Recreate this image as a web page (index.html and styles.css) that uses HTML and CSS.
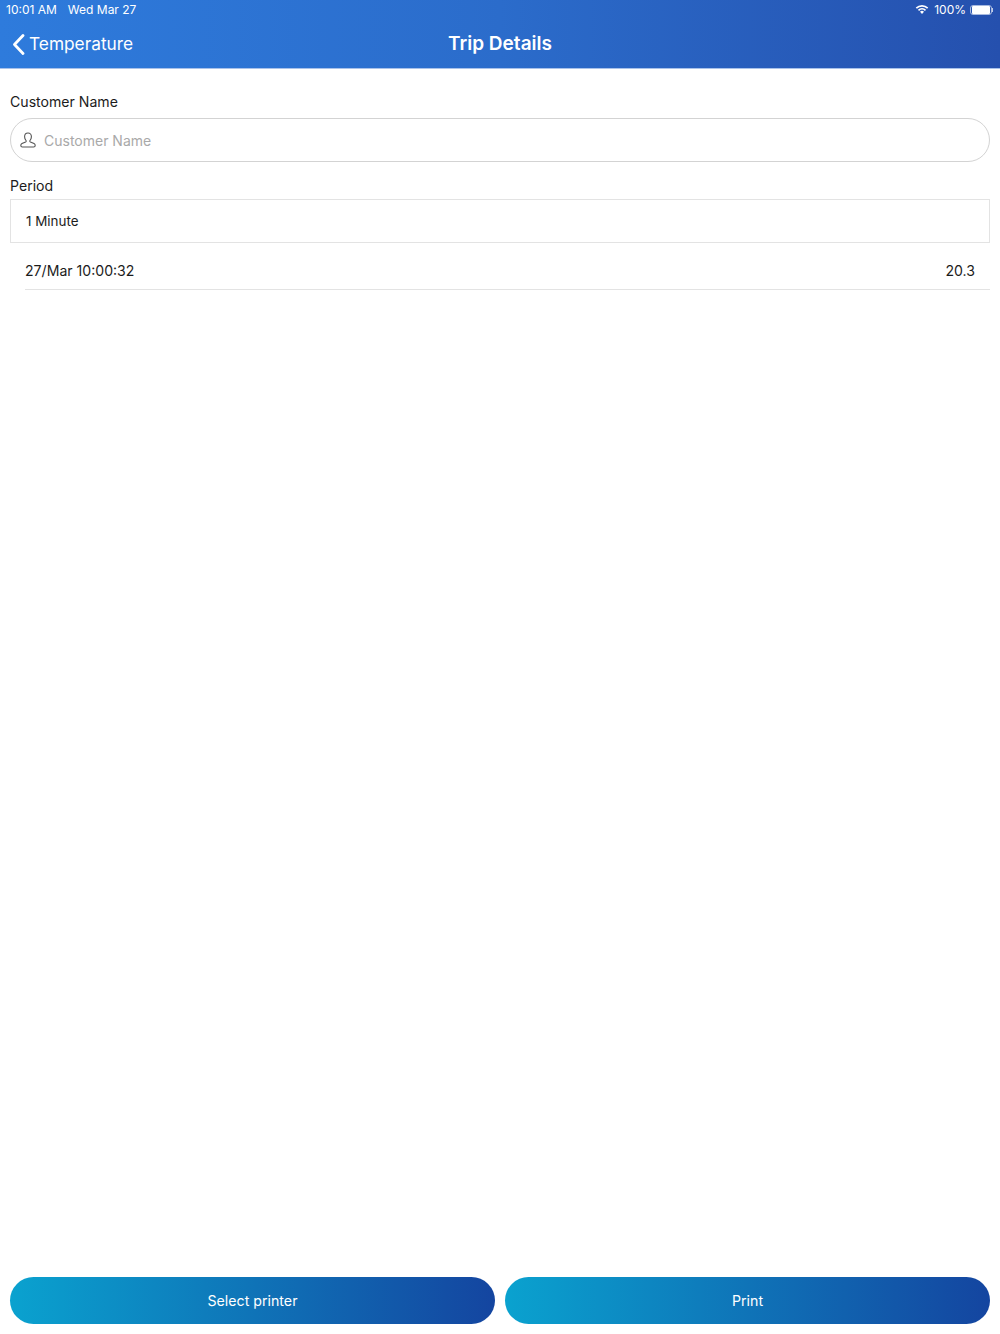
FILE: index.html
```html
<!DOCTYPE html>
<html lang="en">
<head>
  <meta charset="UTF-8">
  <meta name="viewport" content="width=device-width, initial-scale=1.0">
  <title>Trip Details</title>
  <link rel="stylesheet" href="styles.css">
</head>
<body>
  <div class="page">
    <header class="header">
      <div class="status-bar">
        <div class="status-left">
          <span>10:01 AM</span>
          <span>Wed Mar 27</span>
        </div>
        <div class="status-right">
          <svg class="wifi" width="14" height="10" viewBox="0 0 15 11">
            <path d="M0.6 3.8 A10 10 0 0 1 14.4 3.8 L13.1 5.2 A8 8 0 0 0 1.9 5.2 Z" fill="#fff"/>
            <path d="M3 6.2 A6.6 6.6 0 0 1 12 6.2 L10.7 7.6 A4.6 4.6 0 0 0 4.3 7.6 Z" fill="#fff"/>
            <path d="M5.3 8.6 A3.2 3.2 0 0 1 9.7 8.6 L7.5 10.9 Z" fill="#fff"/>
          </svg>
          <span>100%</span>
          <div class="battery"><div class="battery-fill"></div></div>
          <div class="battery-tip"></div>
        </div>
      </div>
      <div class="nav-bar">
        <div class="back">
          <svg class="back-icon" width="13" height="21" viewBox="0 0 13 21">
            <path d="M11 1.5 L2.5 10.5 L11 19.5" fill="none" stroke="#fff" stroke-width="2.8" stroke-linecap="round" stroke-linejoin="round"/>
          </svg>
          <span>Temperature</span>
        </div>
        <h1>Trip Details</h1>
      </div>
    </header>

    <main class="content">
      <label class="field-label">Customer Name</label>
      <div class="name-input">
        <svg class="user-icon" width="16" height="16" viewBox="0 0 16 16">
          <path d="M8 1 C5.9 1 4.6 2.6 4.6 4.7 C4.6 6.4 5.3 7.7 6 8.5 C6.4 9 6.2 9.7 5.6 10 L2 11.6 C1.2 12 0.8 12.6 0.8 13.4 C0.8 14.4 1.5 15 2.4 15 L13.6 15 C14.5 15 15.2 14.4 15.2 13.4 C15.2 12.6 14.8 12 14 11.6 L10.4 10 C9.8 9.7 9.6 9 10 8.5 C10.7 7.7 11.4 6.4 11.4 4.7 C11.4 2.6 10.1 1 8 1 Z" fill="none" stroke="#555" stroke-width="1.1"/>
        </svg>
        <span class="placeholder">Customer Name</span>
      </div>

      <label class="field-label period-label">Period</label>
      <div class="period-box">1 Minute</div>

      <div class="reading">
        <span>27/Mar 10:00:32</span>
        <span>20.3</span>
      </div>
    </main>

    <footer class="actions">
      <button class="action-btn">Select printer</button>
      <button class="action-btn">Print</button>
    </footer>
  </div>
</body>
</html>
```

FILE: styles.css
```css
* {
  box-sizing: border-box;
}
body {
  margin: 0;
  font-family: 'Inter', 'Liberation Sans', sans-serif;
  background: #fff;
  color: #1c1c1c;
}
.page {
  height: 1334px;
  display: flex;
  flex-direction: column;
}
.header {
  height: 69px;
  color: #fff;
  border-bottom: 1px solid #a9c2ea;
  background: linear-gradient(90deg, #2e7bdc 0%, #2b6ccb 50%, #2550ae 100%);
}
.status-bar {
  height: 18px;
  padding: 0 7px 0 6px;
  display: flex;
  justify-content: space-between;
  align-items: center;
  font-size: 12px;
}
.status-left {
  display: flex;
  gap: 11px;
}
.status-right {
  display: flex;
  align-items: center;
  gap: 5px;
}
.battery {
  width: 22px;
  height: 10px;
  margin-left: -1px;
  margin-top: 1px;
  padding: 0 1px;
  border: 1px solid rgba(255,255,255,0.6);
  border-radius: 3px;
}
.battery-fill {
  height: 100%;
  background: #fff;
  border-radius: 1px;
}
.battery-tip {
  width: 1px;
  height: 4px;
  margin-left: -5px;
  margin-top: 1px;
  background: rgba(255,255,255,0.7);
}
.nav-bar {
  height: 50px;
  display: flex;
  align-items: center;
  justify-content: center;
  position: relative;
}
.back {
  position: absolute;
  left: 12px;
  top: 0;
  height: 50px;
  display: flex;
  align-items: center;
  gap: 4px;
  font-size: 17.3px;
}
.back-icon {
  margin-top: 2px;
}
.nav-bar h1 {
  margin: 0;
  font-size: 19px;
  font-weight: 600;
}
.content {
  flex: 1;
  padding: 24px 10px 0;
}
.field-label {
  display: block;
  height: 18px;
  font-size: 14.1px;
  line-height: 18px;
}
.name-input {
  height: 44px;
  margin-top: 7px;
  padding-left: 9px;
  display: flex;
  align-items: center;
  gap: 8px;
  border: 1px solid #d3d3d3;
  border-radius: 22px;
}
.user-icon {
  margin-top: -1px;
}
.placeholder {
  font-size: 14px;
  color: #a9a9a9;
}
.period-label {
  margin-top: 15px;
}
.period-box {
  height: 44px;
  margin-top: 4px;
  padding: 0 0 0 15px;
  display: flex;
  align-items: center;
  font-size: 13.4px;
  border: 1px solid #e3e3e3;
}
.reading {
  height: 47px;
  margin-left: 15px;
  padding: 9px 15px 0 0;
  display: flex;
  justify-content: space-between;
  align-items: center;
  font-size: 14.1px;
  border-bottom: 1px solid #e3e3e3;
}
.actions {
  padding: 0 10px 10px;
  display: flex;
  gap: 10px;
}
.action-btn {
  flex: 1;
  height: 47px;
  border: none;
  border-radius: 24px;
  color: #fff;
  font-family: inherit;
  font-size: 14.2px;
  background: linear-gradient(90deg, #0aa2cf 0%, #1445a0 100%);
}
```
